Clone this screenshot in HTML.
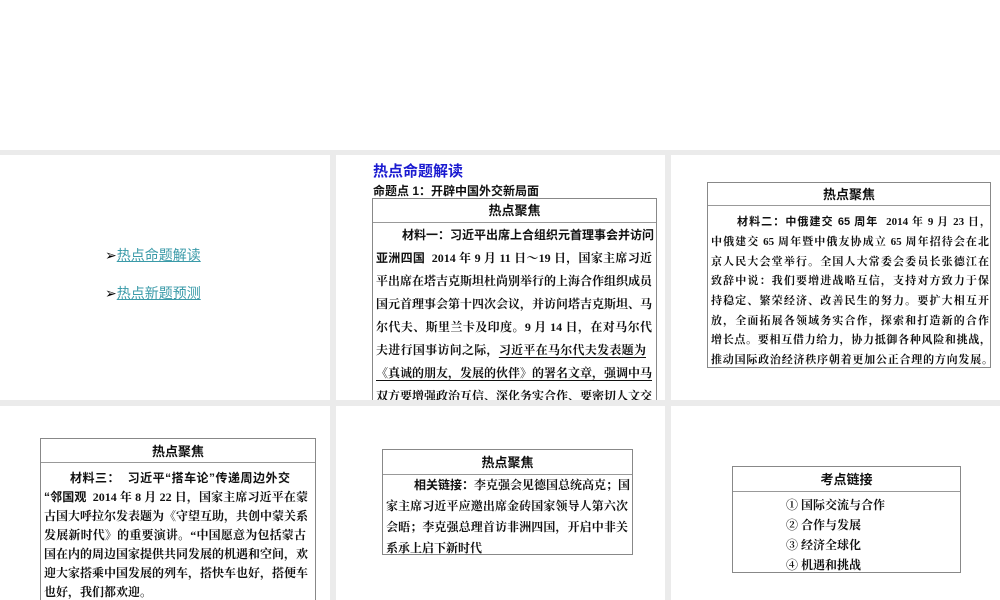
<!DOCTYPE html>
<html><head><meta charset="utf-8"><style>
html,body{margin:0;width:1000px;height:600px;overflow:hidden;}
body{background:#fff;position:relative;font-family:"Liberation Sans","Noto Sans CJK SC",sans-serif;}
.bg{position:absolute;left:0;top:150px;width:1000px;height:450px;background:#ebebeb;}
.p{position:absolute;background:#fff;overflow:hidden;}
.t{position:absolute;border:1px solid #888;background:#fff;box-sizing:border-box;}
.h{border-bottom:1px solid #999;text-align:center;font-weight:bold;font-size:13px;color:#111;}
.l{position:absolute;font-family:"Liberation Serif","Noto Serif CJK SC",serif;font-weight:bold;font-size:12px;line-height:16px;color:#111;white-space:nowrap;text-align:justify;text-align-last:justify;}
.s{font-family:"Liberation Sans","Noto Sans CJK SC",sans-serif;font-weight:bold;}
.sm{font-size:11px;}
u{text-underline-offset:3px}
a{color:#3a9aa8;text-decoration:underline;font-size:14px;}
</style></head><body>
<div class="bg"></div>

<div class="p" style="left:0;top:155px;width:330px;height:245px;">
 <div style="position:absolute;left:105px;top:90px;font-size:14px;">➢<a>热点命题解读</a></div>
 <div style="position:absolute;left:105px;top:128px;font-size:14px;">➢<a>热点新题预测</a></div>
</div>

<div class="p" style="left:336px;top:155px;width:329px;height:245px;">
 <div style="position:absolute;left:37px;top:5px;color:#1a1ad0;font-weight:bold;font-size:15px;">热点命题解读</div>
 <div style="position:absolute;left:37px;top:27px;color:#111;font-weight:bold;font-size:12px;">命题点 1：开辟中国外交新局面</div>
 <div class="t" style="left:36px;top:43px;width:285px;height:210px;">
  <div class="h" style="height:23px;line-height:24px;">热点聚焦</div>
 </div>
 <div class="l s" style="left:66px;top:72px;width:250px;">材料一：习近平出席上合组织元首理事会并访问</div>
 <div class="l" style="left:40px;top:95px;width:276px;"><span class="s">亚洲四国</span>&nbsp; 2014 年 9 月 11 日～19 日，国家主席习近</div>
 <div class="l" style="left:40px;top:118px;width:276px;">平出席在塔吉克斯坦杜尚别举行的上海合作组织成员</div>
 <div class="l" style="left:40px;top:141px;width:276px;">国元首理事会第十四次会议，并访问塔吉克斯坦、马</div>
 <div class="l" style="left:40px;top:164px;width:276px;">尔代夫、斯里兰卡及印度。9 月 14 日，在对马尔代</div>
 <div class="l" style="left:40px;top:187px;width:270px;">夫进行国事访问之际，<u>习近平在马尔代夫发表题为</u></div>
 <div class="l" style="left:40px;top:210px;width:276px;"><u>《真诚的朋友，发展的伙伴》的署名文章，强调中马</u></div>
 <div class="l" style="left:40px;top:233px;width:276px;"><u>双方要增强政治互信、深化务实合作、要密切人文交</u></div>
 <div class="l" style="left:40px;top:256px;"><u>流。</u></div>
</div>

<div class="p" style="left:671px;top:155px;width:329px;height:245px;">
 <div class="t" style="left:36px;top:27px;width:284px;height:186px;">
  <div class="h" style="height:22px;line-height:24px;">热点聚焦</div>
 </div>
 <div class="l sm" style="left:66px;top:59px;width:254px;"><span class="s">材料二：中俄建交 65 周年</span>&nbsp; 2014 年 9 月 23 日，</div>
 <div class="l sm" style="left:40px;top:79px;width:278px;">中俄建交 65 周年暨中俄友协成立 65 周年招待会在北</div>
 <div class="l sm" style="left:40px;top:99px;width:278px;">京人民大会堂举行。全国人大常委会委员长张德江在</div>
 <div class="l sm" style="left:40px;top:118px;width:278px;">致辞中说：我们要增进战略互信，支持对方致力于保</div>
 <div class="l sm" style="left:40px;top:138px;width:278px;">持稳定、繁荣经济、改善民生的努力。要扩大相互开</div>
 <div class="l sm" style="left:40px;top:158px;width:278px;">放，全面拓展各领域务实合作，探索和打造新的合作</div>
 <div class="l sm" style="left:40px;top:177px;width:280px;">增长点。要相互借力给力，协力抵御各种风险和挑战，</div>
 <div class="l sm" style="left:40px;top:197px;width:282px;">推动国际政治经济秩序朝着更加公正合理的方向发展。</div>
</div>

<div class="p" style="left:0;top:406px;width:330px;height:194px;">
 <div class="t" style="left:40px;top:32px;width:276px;height:200px;">
  <div class="h" style="height:23px;line-height:25px;">热点聚焦</div>
 </div>
 <div class="l s" style="left:70px;top:64px;width:220px;">材料三：&nbsp; 习近平“搭车论”传递周边外交</div>
 <div class="l" style="left:44px;top:83px;width:264px;"><span class="s">“邻国观</span>&nbsp; 2014 年 8 月 22 日，国家主席习近平在蒙</div>
 <div class="l" style="left:44px;top:102px;width:262px;">古国大呼拉尔发表题为《守望互助，共创中蒙关系</div>
 <div class="l" style="left:44px;top:121px;width:262px;">发展新时代》的重要演讲。“中国愿意为包括蒙古</div>
 <div class="l" style="left:44px;top:140px;width:262px;">国在内的周边国家提供共同发展的机遇和空间，欢</div>
 <div class="l" style="left:44px;top:159px;width:262px;">迎大家搭乘中国发展的列车，搭快车也好，搭便车</div>
 <div class="l" style="left:44px;top:178px;">也好，我们都欢迎。</div>
</div>

<div class="p" style="left:336px;top:406px;width:329px;height:194px;">
 <div class="t" style="left:46px;top:43px;width:251px;height:106px;">
  <div class="h" style="height:24px;line-height:26px;">热点聚焦</div>
 </div>
 <div class="l" style="left:78px;top:71px;width:214px;"><span class="s">相关链接：</span>李克强会见德国总统高克；国</div>
 <div class="l" style="left:50px;top:92px;width:242px;">家主席习近平应邀出席金砖国家领导人第六次</div>
 <div class="l" style="left:50px;top:113px;width:242px;">会晤；李克强总理首访非洲四国，开启中非关</div>
 <div class="l" style="left:50px;top:134px;">系承上启下新时代</div>
</div>

<div class="p" style="left:671px;top:406px;width:329px;height:194px;">
 <div class="t" style="left:61px;top:60px;width:229px;height:107px;">
  <div class="h" style="height:24px;line-height:26px;">考点链接</div>
 </div>
 <div class="l" style="left:115px;top:91px;">① 国际交流与合作</div>
 <div class="l" style="left:115px;top:111px;">② 合作与发展</div>
 <div class="l" style="left:115px;top:131px;">③ 经济全球化</div>
 <div class="l" style="left:115px;top:151px;">④ 机遇和挑战</div>
</div>
</body></html>
